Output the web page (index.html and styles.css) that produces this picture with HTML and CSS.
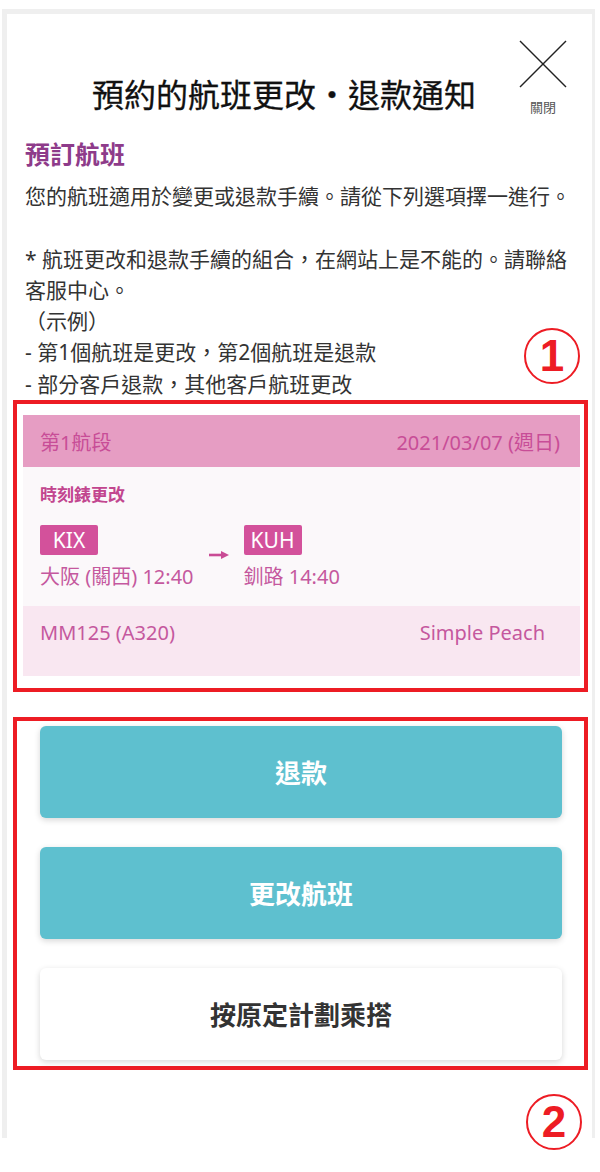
FILE: index.html
```html
<!DOCTYPE html>
<html lang="zh-Hant">
<head>
    <meta charset="UTF-8">
    <meta name="viewport" content="width=device-width, initial-scale=1.0">
    <title>預約的航班更改・退款通知</title>
    <link rel="stylesheet" href="styles.css">
</head>
<body>

    <div class="modal">
        <!-- Header -->
        <header class="modal-head">
            <h1 class="modal-title">預約的航班更改・退款通知</h1>
            <button class="close-btn" type="button">
                <svg width="48" height="48" viewBox="0 0 48 48">
                    <line x1="1" y1="1" x2="47" y2="47" stroke="#222" stroke-width="1.4"/>
                    <line x1="47" y1="1" x2="1" y2="47" stroke="#222" stroke-width="1.4"/>
                </svg>
                <span>關閉</span>
            </button>
        </header>

        <div class="modal-body">
            <h2 class="section-title">預訂航班</h2>
            <p class="notice">
                您的航班適用於變更或退款手續。請從下列選項擇一進行。<br><br>
                * 航班更改和退款手續的組合，在網站上是不能的。請聯絡客服中心。<br>
                （示例）<br>
                - 第1個航班是更改，第2個航班是退款<br>
                - 部分客戶退款，其他客戶航班更改
            </p>

            <!-- Flight -->
            <div class="mark mark-flight">
                <span class="mark-num mark-num-top">1</span>
                <div class="flight-card">
                    <div class="leg-head">
                        <span>第1航段</span>
                        <span>2021/03/07 (週日)</span>
                    </div>
                    <div class="leg-body">
                        <div class="leg-status">時刻錶更改</div>
                        <div class="route">
                            <div class="stop">
                                <span class="code">KIX</span>
                                <span class="city">大阪 (關西) 12:40</span>
                            </div>
                            <svg class="route-arrow" width="20" height="10" viewBox="0 0 20 10">
                                <line x1="0" y1="5" x2="14" y2="5" stroke="#c94b95" stroke-width="2.6"/>
                                <polygon points="12,1 20,5 12,9" fill="#c94b95"/>
                            </svg>
                            <div class="stop">
                                <span class="code">KUH</span>
                                <span class="city">釧路 14:40</span>
                            </div>
                        </div>
                    </div>
                    <div class="leg-foot">
                        <span>MM125 (A320)</span>
                        <span>Simple Peach</span>
                    </div>
                </div>
            </div>

            <!-- Actions -->
            <div class="mark mark-actions">
                <button class="btn" type="button">退款</button>
                <button class="btn" type="button">更改航班</button>
                <button class="btn btn-plain" type="button">按原定計劃乘搭</button>
            </div>
            <div class="mark-foot">
                <span class="mark-num">2</span>
            </div>
        </div>
    </div>

</body>
</html>
```

FILE: styles.css
```css
* {
    box-sizing: border-box;
}

body {
    margin: 0;
    min-height: 1172px;
    font-family: "Noto Sans", "Noto Sans CJK TC", sans-serif;
    color: #333;
    background: #fff;
}

.modal {
    margin: 9px 5px 0 2px;
    height: 1129px;
    border-top: 5px solid #efefef;
    border-left: 5px solid #efefef;
    border-right: 3px solid #efefef;
}

.modal-head {
    display: flex;
    height: 124px;
    padding: 26px 19px 0 48px;
}

.modal-title {
    flex: 1;
    margin: 32px 0 0;
    text-align: center;
    font-family: "Noto Sans CJK TC", sans-serif;
    font-size: 32px;
    line-height: 42px;
    font-weight: 400;
    color: #111;
    -webkit-text-stroke: 0.3px #111;
}

.close-btn {
    width: 60px;
    align-self: flex-start;
    display: flex;
    flex-direction: column;
    align-items: center;
    padding: 0;
    border: none;
    background: none;
    font-family: inherit;
    cursor: pointer;
}

    .close-btn span {
        margin-top: 10px;
        font-size: 13px;
        line-height: 18px;
        color: #555;
    }

.modal-body {
    padding: 0 18px;
}

.section-title {
    margin: 0;
    font-size: 25px;
    line-height: 32px;
    font-weight: 700;
    color: #8e3b8a;
}

.notice {
    margin: 11px 0 0;
    font-size: 21px;
    line-height: 31.3px;
    color: #333;
}

/* red annotation boxes */
.mark {
    position: relative;
    margin: 0 -14px 0 -12px;
    border: 4px solid #ed1c24;
}

.mark-flight {
    padding: 11px 4px 12px 6px;
}

.mark-actions {
    margin-top: 25px;
    padding: 5px 22px 6px 23px;
}

.mark-num {
    display: block;
    width: 56px;
    height: 56px;
    border: 2px solid #ed1c24;
    border-radius: 50%;
    color: #ed1c24;
    font-family: "Liberation Sans", Arial, sans-serif;
    font-weight: 700;
    font-size: 44px;
    line-height: 52px;
    text-align: center;
}

.mark-num-top {
    position: absolute;
    right: 4px;
    top: -76px;
}

.mark-foot {
    display: flex;
    justify-content: flex-end;
    margin: 24px -8px 0 0;
}

/* flight card */
.leg-head {
    display: flex;
    justify-content: space-between;
    align-items: center;
    height: 52px;
    padding: 0 20px 0 17px;
    background: #e69dc3;
    color: #c84d97;
    font-size: 20px;
}

.leg-body {
    padding: 16px 17px;
    background: #fbf8fa;
}

.leg-status {
    margin-bottom: 18px;
    font-size: 17px;
    line-height: 24px;
    font-weight: 700;
    color: #c2468f;
}

.route {
    display: flex;
    align-items: center;
    gap: 15px;
}

.stop {
    display: flex;
    flex-direction: column;
    align-items: flex-start;
}

    .stop .code {
        width: 58px;
        height: 30px;
        border-radius: 2px;
        background: #d3519b;
        color: #fff;
        font-size: 21px;
        line-height: 30px;
        text-align: center;
    }

    .stop .city {
        margin-top: 9px;
        font-size: 20px;
        line-height: 26px;
        color: #c5589e;
    }

.route-arrow {
    margin-top: -6px;
}

.leg-foot {
    display: flex;
    justify-content: space-between;
    padding: 14px 35px 30px 17px;
    background: #f9e7f1;
    color: #c5589e;
    font-size: 20px;
    line-height: 26px;
}

/* buttons */
.btn {
    display: block;
    width: 100%;
    height: 92px;
    border: none;
    border-radius: 6px;
    background: #5ec0cf;
    color: #fff;
    font-family: inherit;
    font-size: 26px;
    font-weight: 700;
    box-shadow: 0 2px 6px rgba(0, 0, 0, 0.16);
    cursor: pointer;
}

    .btn + .btn {
        margin-top: 29px;
    }

.btn-plain {
    background: #fff;
    color: #333;
}
```
